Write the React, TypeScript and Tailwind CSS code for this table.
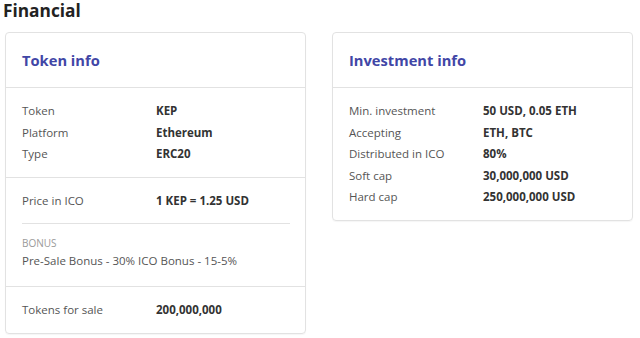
const font = { fontFamily: '"Open Sans", "Liberation Sans", sans-serif' };

type Row = { label: string; value: string };

function InfoRows({ rows }: { rows: Row[] }) {
  return (
    <div className="flex flex-col">
      {rows.map((r) => (
        <div key={r.label} className="flex h-[21.5px] items-center text-[11.5px]">
          <span className="w-[134px] shrink-0 text-[#555]">{r.label}</span>
          <span className="font-bold text-[#333]">{r.value}</span>
        </div>
      ))}
    </div>
  );
}

function CardHeader({ title }: { title: string }) {
  return (
    <div className="h-[55px] flex items-center px-4 border-b border-[#e2e2e2]">
      <h3 className="text-[14.7px] font-bold text-[#4146a6] leading-6">{title}</h3>
    </div>
  );
}

export default function App() {
  return (
    <div className="w-[640px] h-[338px] bg-white overflow-hidden" style={font}>
      <h2 className="pl-[3px] text-[17.3px] leading-[22px] font-bold text-[#222]">Financial</h2>

      <div className="mt-[10px] pl-[5px] flex gap-[26px] items-start">
        {/* Token info */}
        <div className="w-[301px] border border-[#e2e2e2] rounded-[4px] shadow-[0_1px_1px_rgba(0,0,0,0.04)]">
          <CardHeader title="Token info" />
          <div className="px-4 py-3 border-b border-[#e2e2e2]">
            <InfoRows
              rows={[
                { label: "Token", value: "KEP" },
                { label: "Platform", value: "Ethereum" },
                { label: "Type", value: "ERC20" },
              ]}
            />
          </div>
          <div className="px-4 border-b border-[#e2e2e2]">
            <div className="py-3 border-b border-[#e2e2e2] mr-[-1px]">
              <InfoRows rows={[{ label: "Price in ICO", value: "1 KEP = 1.25 USD" }]} />
            </div>
            <div className="pt-[12px] pb-[15px]">
              <div className="text-[10px] leading-[14px] uppercase text-[#9a9a9a]">Bonus</div>
              <div className="text-[11.5px] leading-[21px] text-[#555]">
                Pre-Sale Bonus - 30% ICO Bonus - 15-5%
              </div>
            </div>
          </div>
          <div className="px-4 py-3">
            <InfoRows rows={[{ label: "Tokens for sale", value: "200,000,000" }]} />
          </div>
        </div>

        {/* Investment info */}
        <div className="w-[301px] border border-[#e2e2e2] rounded-[4px] shadow-[0_1px_1px_rgba(0,0,0,0.04)]">
          <CardHeader title="Investment info" />
          <div className="px-4 py-3">
            <InfoRows
              rows={[
                { label: "Min. investment", value: "50 USD, 0.05 ETH" },
                { label: "Accepting", value: "ETH, BTC" },
                { label: "Distributed in ICO", value: "80%" },
                { label: "Soft cap", value: "30,000,000 USD" },
                { label: "Hard cap", value: "250,000,000 USD" },
              ]}
            />
          </div>
        </div>
      </div>
    </div>
  );
}
